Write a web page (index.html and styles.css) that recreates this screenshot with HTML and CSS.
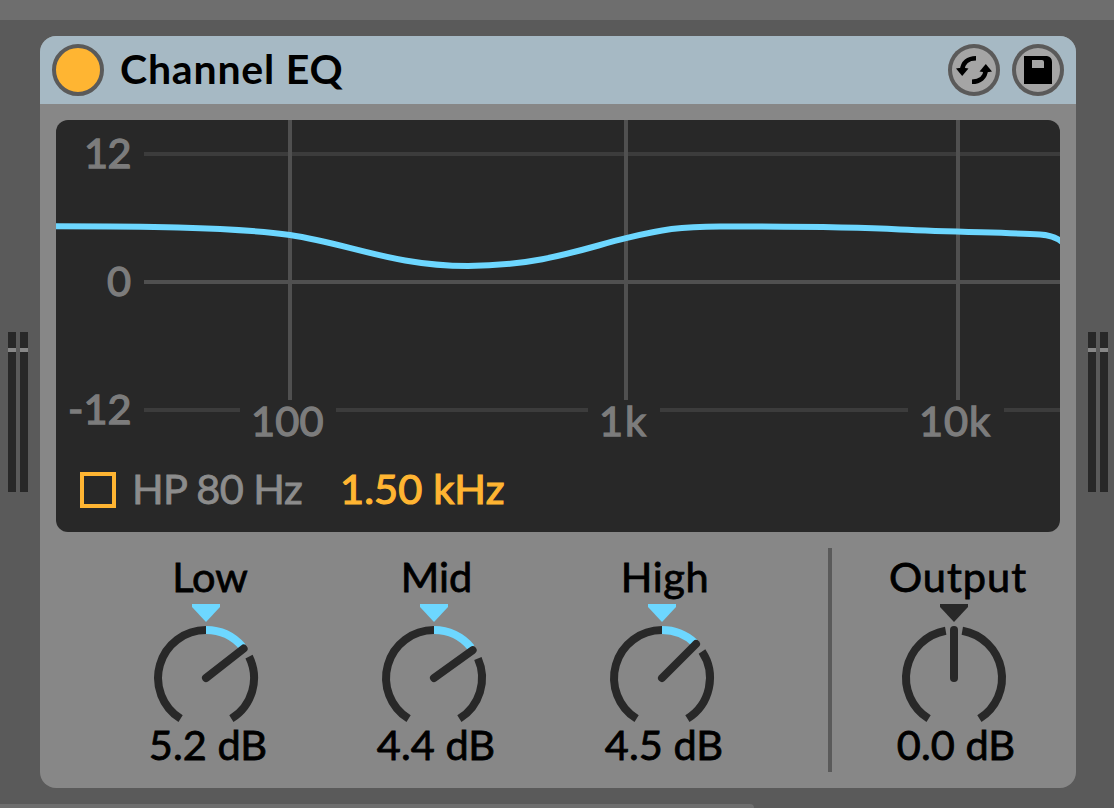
FILE: index.html
```html
<!DOCTYPE html>
<html lang="en">
<head>
<meta charset="utf-8">
<title>Channel EQ</title>
<link rel="stylesheet" href="styles.css">
</head>
<body>
<div class="rack">
  <div class="rack-top"></div>
  <main class="rack-row">
    <div class="meter"><i class="bar"></i><i class="bar"></i></div>
    <section class="device">
      <header class="device-header">
        <span class="power"></span>
        <h1 class="title">Channel EQ</h1>
        <button class="round-button" aria-label="Hot-swap">
          <svg width="52" height="52" viewBox="0 0 52 52">
            <path d="M28 14.200C20 14.200 14.800 18.500 14.200 26" class="swap-stroke"/>
            <path d="M8 24.500Q14 23 20.500 24.500L14.200 32z"/>
            <path d="M24 37.800C32 37.800 37.200 33.500 37.800 26" class="swap-stroke"/>
            <path d="M31.500 27.500Q38 29 44 27.500L37.800 20z"/>
          </svg>
        </button>
        <button class="round-button" aria-label="Save">
          <svg width="52" height="52" viewBox="0 0 52 52">
            <path fill-rule="evenodd" d="M12 12H35Q40 13 40 18V40H12zM20 16V24H32V18Q32 16 30 16z"/>
          </svg>
        </button>
      </header>
      <div class="display">
        <svg class="graph" width="1004" height="340" viewBox="56 120 1004 340">
          <path class="grid-dim" d="M144 154H1060M144 410H240M336 410H588M660 410H908M1004 410H1060"/>
          <path class="grid" d="M144 282H1060M290 120V400M626 120V400M958 120V400"/>
          <g class="labels">
            <text x="84" y="168" textLength="47.500">12</text>
            <text x="107" y="296" textLength="25">0</text>
            <text x="68" y="424" textLength="63.500">-12</text>
            <text x="251" y="436" textLength="72.500">100</text>
            <text x="599" y="436" textLength="47">1k</text>
            <text x="919" y="436" textLength="71">10k</text>
          </g>
          <path class="curve" d="M54 226.300C130 226.300 230 226.500 290 235C350 244 394 266 468 266C542 266 588 247 626 238.200C662 229.500 680 226.500 720 226.500C780 226.500 850 227 900 229.500C960 232.300 1010 232.500 1040 234.500C1050 235 1057 238 1062 242"/>
        </svg>
        <div class="filter-row">
          <span class="checkbox"></span>
          <span class="hp">HP 80 Hz</span>
          <span class="freq">1.50 kHz</span>
        </div>
      </div>
      <div class="controls">
        <div class="bands">
          <div class="control">
            <span class="name">Low</span>
            <svg class="knob" width="112" height="126" viewBox="-56 -78 112 126">
              <path class="marker active" d="M-14-74H14V-71L0-56L-14-71z"/>
              <path class="arc" d="M-25.400 40.700A48 48 0 0 1 0-48M43-21.400A48 48 0 0 1 25.400 40.700"/>
              <path class="arc value" d="M0-48A48 48 0 0 1 36.500-31.200"/>
              <path class="needle" d="M0 0L37.600-29.400"/>
            </svg>
            <span class="reading">5.2 dB</span>
          </div>
          <div class="control">
            <span class="name name-mid">Mid</span>
            <svg class="knob" width="112" height="126" viewBox="-56 -78 112 126">
              <path class="marker active" d="M-14-74H14V-71L0-56L-14-71z"/>
              <path class="arc" d="M-25.400 40.700A48 48 0 0 1 0-48M43.900-19.500A48 48 0 0 1 25.400 40.700"/>
              <path class="arc value" d="M0-48A48 48 0 0 1 37.200-30.300"/>
              <path class="needle" d="M0 0L38.600-27.800"/>
            </svg>
            <span class="reading">4.4 dB</span>
          </div>
          <div class="control">
            <span class="name name-high">High</span>
            <svg class="knob" width="112" height="126" viewBox="-56 -78 112 126">
              <path class="marker active" d="M-14-74H14V-71L0-56L-14-71z"/>
              <path class="arc" d="M-25.400 40.700A48 48 0 0 1 0-48M40-26.500A48 48 0 0 1 25.400 40.700"/>
              <path class="arc value" d="M0-48A48 48 0 0 1 32.500-35.300"/>
              <path class="needle" d="M0 0L34-34"/>
            </svg>
            <span class="reading">4.5 dB</span>
          </div>
        </div>
        <div class="divider"></div>
        <div class="control output">
          <span class="name name-output">Output</span>
          <svg class="knob" width="112" height="126" viewBox="-56 -78 112 126">
            <path class="marker" d="M-14-74H14V-71L0-56L-14-71z"/>
            <path class="arc" d="M-25.400 40.700A48 48 0 0 1-8.300-47.300M8.300-47.300A48 48 0 0 1 25.400 40.700"/>
            <path class="needle" d="M0 0V-48"/>
          </svg>
          <span class="reading">0.0 dB</span>
        </div>
      </div>
    </section>
    <div class="meter"><i class="bar"></i><i class="bar"></i></div>
  </main>
  <div class="rack-bottom"></div>
</div>
</body>
</html>
```
FILE: styles.css
```css
* { box-sizing: border-box; }
body { margin: 0; background: #5a5a5a; font-family: Lato, "Liberation Sans", sans-serif; }
svg { display: block; }
.rack { width: 1114px; height: 808px; display: flex; flex-direction: column; overflow: hidden; background: #5a5a5a; }
.rack-top { height: 20px; background: #6e6e6e; }
.rack-row { display: flex; padding: 16px 6px 16px 8px; height: 784px; }
.meter { display: flex; gap: 4px; width: 20px; height: 160px; margin-top: 296px; }
.bar { width: 8px; height: 160px; background: linear-gradient(#282828 16px, #878787 16px 20px, #282828 20px); }
.device { width: 1036px; height: 752px; margin: 0 12px; border-radius: 16px; background: #878787; overflow: hidden; }
.device-header { display: flex; align-items: center; height: 68px; padding: 0 12px; background: #a6b9c4; }
.power { width: 52px; height: 52px; border: 4px solid #5a5a5a; border-radius: 50%; background: #ffb532; }
.title { flex: 1; height: 68px; margin: 0 0 0 16px; font-size: 41px; font-weight: 700; line-height: 66px; letter-spacing: 0.8px; color: #000; white-space: nowrap; }
.round-button { width: 52px; height: 52px; padding: 0; margin-left: 12px; border: 0; border-radius: 50%; background: #a5a5a5; box-shadow: inset 0 0 0 4px #5a5a5a; }
.swap-stroke { fill: none; stroke: #000; stroke-width: 4.5; }
.display { width: 1004px; height: 412px; margin: 16px 16px 0; border-radius: 12px; background: #282828; overflow: hidden; }
.grid-dim { fill: none; stroke: #3c3c3c; stroke-width: 4; }
.grid { fill: none; stroke: #505050; stroke-width: 4; }
.labels { fill: #7c7c7c; stroke: #7c7c7c; stroke-width: 1.3; font-size: 41.5px; }
.curve { fill: none; stroke: #6dd7ff; stroke-width: 6; }
.filter-row { display: flex; align-items: center; height: 60px; padding-left: 24px; font-size: 41.5px; line-height: 56px; white-space: nowrap; -webkit-text-stroke-width: 1.2px; }
.checkbox { width: 36px; height: 36px; border: 4px solid #ffb532; }
.hp { width: 208px; height: 60px; margin-left: 16px; letter-spacing: -0.6px; color: #8c8c8c; -webkit-text-stroke-width: 0.8px; }
.freq { height: 60px; color: #ffb532; letter-spacing: 0.1px; }
.controls { display: flex; height: 256px; padding-top: 16px; }
.bands { display: flex; gap: 28px; padding-left: 66px; width: 788px; }
.control { display: flex; flex-direction: column; align-items: center; width: 200px; height: 224px; color: #000; font-size: 41.5px; white-space: nowrap; -webkit-text-stroke-width: 0.8px; }
.name { height: 52px; line-height: 56px; margin-left: 8px; }
.name-mid { margin-left: 5px; }
.name-high { margin-left: 6px; letter-spacing: 0.6px; }
.name-output { letter-spacing: 1px; }
.knob { overflow: visible; }
.reading { height: 44px; line-height: 36px; margin-left: 4px; }
.divider { width: 4px; height: 224px; background: #5a5a5a; }
.output { margin-left: 22px; }
.marker { fill: #282828; }
.marker.active { fill: #6dd7ff; }
.arc { fill: none; stroke: #282828; stroke-width: 8; }
.arc.value { stroke: #6dd7ff; }
.needle { fill: none; stroke: #282828; stroke-width: 8; stroke-linecap: round; }
.rack-bottom { width: 754px; height: 4px; border-top-right-radius: 4px; background: #6e6e6e; }
```
